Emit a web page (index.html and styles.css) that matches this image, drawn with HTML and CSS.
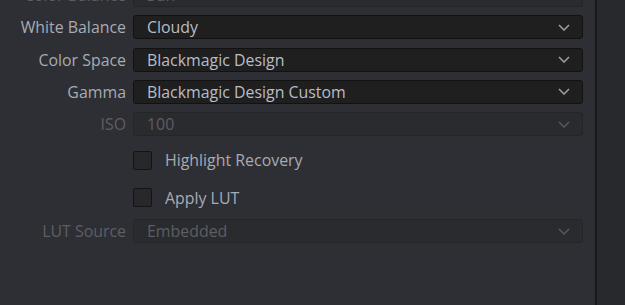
FILE: index.html
```html
<!DOCTYPE html>
<html lang="en">
<head>
    <meta charset="UTF-8">
    <title>Camera Raw</title>
    <link rel="stylesheet" href="styles.css">
</head>
<body>

<div class="window">
    <div class="panel">
        <div class="form">
            <div class="row disabled">
                <span class="label">Color Balance</span>
                <div class="field"><span>Sun</span><svg class="chev" viewBox="0 0 12 7"><path d="M1 1 L6 6 L11 1"/></svg></div>
            </div>
            <div class="row">
                <span class="label">White Balance</span>
                <div class="field"><span>Cloudy</span><svg class="chev" viewBox="0 0 12 7"><path d="M1 1 L6 6 L11 1"/></svg></div>
            </div>
            <div class="row">
                <span class="label">Color Space</span>
                <div class="field"><span>Blackmagic Design</span><svg class="chev" viewBox="0 0 12 7"><path d="M1 1 L6 6 L11 1"/></svg></div>
            </div>
            <div class="row">
                <span class="label">Gamma</span>
                <div class="field"><span>Blackmagic Design Custom</span><svg class="chev" viewBox="0 0 12 7"><path d="M1 1 L6 6 L11 1"/></svg></div>
            </div>
            <div class="row disabled">
                <span class="label">ISO</span>
                <div class="field"><span>100</span><svg class="chev" viewBox="0 0 12 7"><path d="M1 1 L6 6 L11 1"/></svg></div>
            </div>
            <div class="row check">
                <span class="label"></span>
                <span class="box"></span>
                <span class="check-text">Highlight Recovery</span>
            </div>
            <div class="row check">
                <span class="label"></span>
                <span class="box"></span>
                <span class="check-text">Apply LUT</span>
            </div>
            <div class="row disabled">
                <span class="label">LUT Source</span>
                <div class="field"><span>Embedded</span><svg class="chev" viewBox="0 0 12 7"><path d="M1 1 L6 6 L11 1"/></svg></div>
            </div>
        </div>
    </div>
    <div class="side"></div>
</div>

</body>
</html>
```

FILE: styles.css
```css
html, body {
    margin: 0;
    height: 100%;
    overflow: hidden;
}
body {
    font-family: "Open Sans", "Noto Sans", sans-serif;
    font-size: 15.9px;
    background-color: #2e2f34;
}
.window {
    display: flex;
    height: 305px;
}
.panel {
    width: 595px;
    background-color: #2e2f34;
    border-right: 2px solid #19191b;
    overflow: hidden;
}
.side {
    flex: 1;
    background-color: #28292d;
}
.form {
    display: flex;
    flex-direction: column;
    margin-top: -17px;
}
.row {
    display: flex;
    align-items: center;
    height: 24px;
    margin-bottom: 8.3px;
}
.label {
    width: 126px;
    margin-right: 7px;
    text-align: right;
    white-space: nowrap;
    color: #a7abb3;
    flex-shrink: 0;
}
.field {
    box-sizing: border-box;
    width: 450px;
    height: 24px;
    display: flex;
    align-items: center;
    justify-content: space-between;
    padding: 0 12px 0 13px;
    background-color: #1f1f20;
    border: 1px solid #121213;
    border-radius: 3px;
    color: #b9bdc5;
}
.chev {
    width: 12px;
    height: 7px;
    fill: none;
    stroke: #9c9c9e;
    stroke-width: 1.6;
}
.disabled .label {
    color: #5d5e63;
}
.disabled .field {
    background-color: #2a2b2f;
    border-color: #242529;
    color: #5d5e63;
}
.disabled .chev {
    stroke: #55565a;
}
.row.check {
    height: 32px;
    margin-bottom: 5.5px;
}
.box {
    box-sizing: border-box;
    width: 19px;
    height: 19px;
    background-color: #28282a;
    border: 1px solid #141415;
    border-radius: 2px;
}
.check-text {
    margin-left: 13px;
    color: #a7abb3;
}
```
